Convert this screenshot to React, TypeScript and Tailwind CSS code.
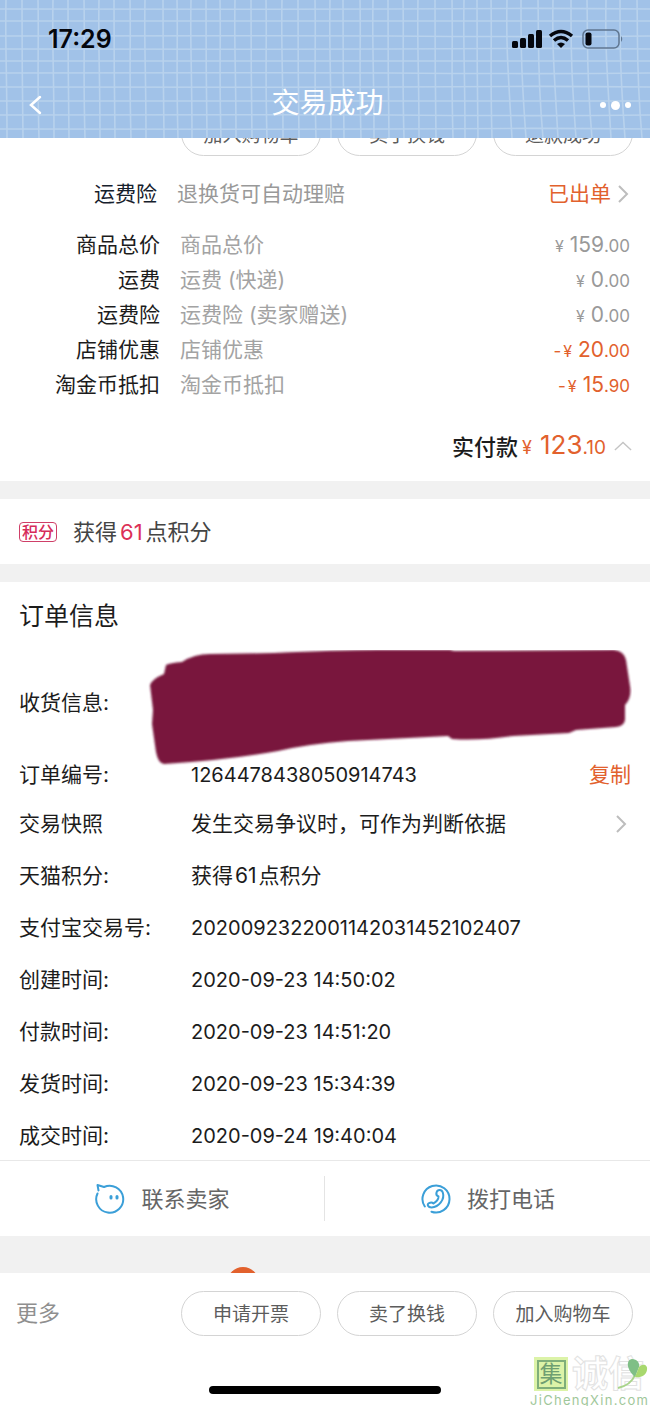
import React from "react";

const GRID_X = [
    6, 22, 38, 53, 68, 84, 99, 114, 130, 145, 163, 177, 191, 206, 220, 235, 251, 266, 282, 298, 315,
    330, 343, 360, 373, 388, 403, 418, 435, 452, 464, 477, 491, 507, 521, 538, 553, 571, 587, 606, 620, 637,
];
const GRID_Y = [9, 21, 36, 49, 61, 73, 87, 101, 115, 129];

const FEES = [
    { label: "商品总价", detail: "商品总价", yuan: "159", cents: "00", off: false },
    { label: "运费", detail: "运费 (快递)", yuan: "0", cents: "00", off: false },
    { label: "运费险", detail: "运费险 (卖家赠送)", yuan: "0", cents: "00", off: false },
    { label: "店铺优惠", detail: "店铺优惠", yuan: "20", cents: "00", off: true },
    { label: "淘金币抵扣", detail: "淘金币抵扣", yuan: "15", cents: "90", off: true },
];

const DETAILS = [
    { label: "支付宝交易号:", value: "2020092322001142031452102407" },
    { label: "创建时间:", value: "2020-09-23 14:50:02" },
    { label: "付款时间:", value: "2020-09-23 14:51:20" },
    { label: "发货时间:", value: "2020-09-23 15:34:39" },
    { label: "成交时间:", value: "2020-09-24 19:40:04" },
];

const PillButton: React.FC<{ children: string }> = ({ children }) => (
    <button
        type="button"
        className="h-[45px] w-[140px] shrink-0 rounded-full border border-[#d4d4d4] bg-white pt-1 text-[19px] text-[#5c5c5c]"
    >
        {children}
    </button>
);

const ArrowRight = () => (
    <svg width="12" height="20" viewBox="0 0 12 20" fill="none" stroke="#bdbdbd" strokeWidth="2" aria-hidden="true">
        <path d="M2 2 L10 10 L2 18" />
    </svg>
);

const GridPattern = () => (
    <svg
        className="absolute inset-0 h-full w-full"
        viewBox="0 0 650 138"
        preserveAspectRatio="none"
        fill="none"
        stroke="#b8d2ed"
        strokeWidth="1.600"
        aria-hidden="true"
    >
        {GRID_X.map((x, i) => {
            const bend = (i % 3) - 1;
            const lean = x > 500 ? 5 : 1;
            return <path key={x} d={`M${x} 0 C${x + bend} 45 ${x - bend} 70 ${x + lean} 138`} />;
        })}
        {GRID_Y.map((y, i) => {
            const bend = (i % 3) - 1;
            return <path key={y} d={`M0 ${y} C160 ${y + bend} 260 ${y - bend} 390 ${y} S560 ${y + bend} 650 ${y}`} />;
        })}
    </svg>
);

const StatusIcons = () => (
    <svg width="112" height="22" viewBox="0 0 112 22" aria-hidden="true">
        <g fill="#05070d">
            <rect x="1" y="13" width="6" height="7" rx="1.500" />
            <rect x="9" y="10" width="6" height="10" rx="1.500" />
            <rect x="17" y="6" width="6" height="14" rx="1.500" />
            <rect x="25" y="2" width="6" height="18" rx="1.500" />
            <path d="M50 20 L46 16 Q50 13 54 16 Z" />
        </g>
        <g fill="none" stroke="#05070d" strokeWidth="3.500">
            <path d="M39 8 Q50 -1 61 8" />
            <path d="M43 12.500 Q50 6.500 57 12.500" />
        </g>
        <rect x="72" y="2" width="36" height="18" rx="5" fill="none" stroke="#5f7690" strokeWidth="1.500" />
        <rect x="74.500" y="4.500" width="6" height="13" rx="2" fill="#05070d" />
        <path d="M110 8 Q112.500 11 110 14 Z" fill="#5f7690" />
    </svg>
);

const SellerIcon = () => (
    <svg width="32" height="32" viewBox="0 0 32 32" fill="none" stroke="#3b9fd8" strokeWidth="2" strokeLinecap="round" aria-hidden="true">
        <path d="M3.500 10.500 A13.500 13.500 0 1 0 10 4 L3.500 2 L4.500 7.500" strokeLinejoin="round" />
        <path d="M17 13.500 V15 M23 13.500 V15" strokeWidth="3" />
    </svg>
);

const PhoneIcon = () => (
    <svg width="32" height="32" viewBox="0 0 32 32" fill="none" stroke="#3b9fd8" strokeWidth="2" strokeLinecap="round" aria-hidden="true">
        <path d="M4.800 23.500 A13.500 13.500 0 1 1 11.500 28.700" />
        <path
            d="M16.500 9.500 C17.500 6.500 21.500 6 22.800 9.500 C25 16.500 19 24 11.500 24.500 C8 24.500 6.500 21.500 9 20.200 C10.500 19.300 12.300 19.300 13.200 20.500 C16.500 18.800 18.500 16.500 18.500 13.500 C16.800 12.800 16 11.200 16.500 9.500 Z"
            strokeLinejoin="round"
        />
    </svg>
);

const Redaction = () => (
    <svg
        className="absolute left-[148px] top-0 h-[117px] w-[calc(100%-166px)]"
        viewBox="0 0 484 117"
        preserveAspectRatio="none"
        aria-hidden="true"
    >
        <defs>
            <filter id="brush" x="-5%" y="-5%" width="110%" height="110%">
                <feGaussianBlur stdDeviation="1.200" />
            </filter>
        </defs>
        <path
            filter="url(#brush)"
            fill="#79193d"
            d="M2 35 Q4 29 16 24 L18 15 Q22 13 34 12 Q46 4 62 4 L126 3 Q190 0 230 0 L302 0 L306 1 L466 0 Q476 1 478 10 L482 36 Q484 48 477 55 L477 70 Q476 76 468 77 L428 80 L421 83 L365 86 Q330 91 304 89 L300 86 L200 91 Q160 94 130 101 Q80 110 16 114 Q10 113 8 102 L4 74 L5 60 Z"
        />
    </svg>
);

const Watermark = () => (
    <div className="absolute bottom-0 right-0 w-[120px]" aria-hidden="true">
        <div className="flex h-[34px] items-center gap-1 pl-[4px]">
            <span className="flex size-[34px] shrink-0 items-center justify-center bg-[#dcf3a8]">
                <span className="flex size-[29px] items-center justify-center border-2 border-[#7fae7a] text-[23px] leading-none text-[#6f9f72]">
                    集
                </span>
            </span>
            <span className="text-[36px] font-bold leading-none text-white [-webkit-text-stroke:1px_#e2e2e2]">诚信</span>
        </div>
        <svg className="absolute right-0 top-0" width="36" height="34" viewBox="0 0 36 34">
            <path d="M4 31 Q17 28 21 18" fill="none" stroke="#a9d48a" strokeWidth="2" />
            <path d="M21 20 C12 12 12 3 18 2 C23 2 26 6 25 10 Z" fill="#7fbf86" />
            <path d="M21 20 L25 10 C29 6 34 8 33 13 C32 19 26 21 21 20 Z" fill="#a8d86e" />
        </svg>
        <div className="mt-[3px] whitespace-nowrap text-[13px] leading-[12px] tracking-widest text-[#9fc79a]">JiChengXin.com</div>
    </div>
);

export default function App() {
    return (
        <main className="relative w-full overflow-hidden bg-white font-['Inter','Noto_Sans_CJK_SC',sans-serif] text-[21px] leading-[30px] text-[#1c1c1c]">
            <header className="relative bg-[#a1c2e8]">
                <GridPattern />
                <div className="relative flex h-[72px] items-center justify-between pl-[48px] pr-[27px] pt-[6px]">
                    <span className="text-[25px] font-semibold text-[#05070d]">17:29</span>
                    <StatusIcons />
                </div>
                <div className="relative flex h-[66px] items-center justify-between pl-[28px] pr-[19px] text-white">
                    <button type="button" aria-label="返回" className="flex w-8 justify-start">
                        <svg width="14" height="20" viewBox="0 0 14 20" fill="none" stroke="currentColor" strokeWidth="2.500" strokeLinecap="round">
                            <path d="M12 2 L3 10 L12 18" />
                        </svg>
                    </button>
                    <h1 className="pb-1 text-[28px]">交易成功</h1>
                    <button type="button" aria-label="更多选项" className="flex w-9 items-center justify-end gap-[5px]">
                        <span className="size-[6px] shrink-0 rounded-full bg-white" />
                        <span className="size-[9px] shrink-0 rounded-full bg-white" />
                        <span className="size-[6px] shrink-0 rounded-full bg-white" />
                    </button>
                </div>
            </header>

            {/* Item actions, scrolled under the header */}
            <div className="flex h-[18px] items-end justify-end gap-4 overflow-hidden pr-[17px]">
                <PillButton>加入购物车</PillButton>
                <PillButton>卖了换钱</PillButton>
                <PillButton>退款成功</PillButton>
            </div>

            <section>
                <a href="#insurance" className="flex h-[71px] items-center pl-5 pr-[21px] pt-1">
                    <span className="w-[137px] text-right text-[#16202c]">运费险</span>
                    <span className="ml-5 text-[#999]">退换货可自动理赔</span>
                    <span className="ml-auto mr-[6px] text-[#e2612d]">已出单</span>
                    <ArrowRight />
                </a>
                <dl>
                    {FEES.map((fee) => (
                        <div key={fee.label} className="flex h-[35px] items-center px-5">
                            <dt className="w-[140px] text-right">{fee.label}</dt>
                            <dd className="ml-5 text-[#a3a3a3]">{fee.detail}</dd>
                            <dd className={`ml-auto flex items-baseline pt-[2px] ${fee.off ? "text-[#e2612d]" : "text-[#999]"}`}>
                                {fee.off && <span className="mr-[2px] text-[17px]">-</span>}
                                <span className="mr-[6px] text-[16px]">¥</span>
                                <span className="text-[21px]">{fee.yuan}</span>
                                <span className="text-[17px]">.{fee.cents}</span>
                            </dd>
                        </div>
                    ))}
                </dl>
                <div className="flex h-[79px] items-center justify-end pr-[18px] pt-[10px]">
                    <span className="mr-1 text-[22px] font-medium">实付款</span>
                    <span className="flex items-baseline text-[#e2612d]">
                        <span className="mr-2 text-[18px]">¥</span>
                        <span className="text-[26px]">123</span>
                        <span className="text-[19px]">.10</span>
                    </span>
                    <button type="button" aria-label="收起" className="ml-2">
                        <svg width="18" height="11" viewBox="0 0 20 12" fill="none" stroke="#c4c4c4" strokeWidth="1.500">
                            <path d="M1 10 L10 1.500 L19 10" />
                        </svg>
                    </button>
                </div>
            </section>

            <section className="border-y-[18px] border-[#f1f1f1]">
                <div className="flex h-[65px] items-center px-[19px]">
                    <span className="flex h-5 w-[38px] items-center justify-center rounded-sm border border-[#cf3f68] text-[16px] font-medium text-[#d62c5a]">
                        积分
                    </span>
                    <p className="ml-4 text-[22px] text-[#444]">
                        获得<span className="mx-[3px] text-[#dc2f57]">61</span>点积分
                    </p>
                </div>
            </section>

            <section>
                <h2 className="flex h-[68px] items-center px-[19px] text-[25px]">订单信息</h2>
                <dl className="-mb-[2px]">
                    <div className="relative flex h-[102px] items-center px-[19px] pt-1">
                        <dt>收货信息:</dt>
                        <dd>
                            <Redaction />
                        </dd>
                    </div>
                    <div className="flex h-[46px] items-center px-[19px]">
                        <dt className="w-[172px]">订单编号:</dt>
                        <dd className="text-[20px]">1264478438050914743</dd>
                        <dd className="ml-auto">
                            <button type="button" className="text-[#e2612d]">复制</button>
                        </dd>
                    </div>
                    <div className="flex h-[52px] items-center pl-[19px] pr-[23px]">
                        <dt className="w-[172px]">交易快照</dt>
                        <dd className="flex-1">
                            <a href="#snapshot" className="flex items-center justify-between">
                                发生交易争议时，可作为判断依据
                                <ArrowRight />
                            </a>
                        </dd>
                    </div>
                    <div className="flex h-[52px] items-center px-[19px]">
                        <dt className="w-[172px]">天猫积分:</dt>
                        <dd>
                            获得<span className="mx-[2px]">61</span>点积分
                        </dd>
                    </div>
                    {DETAILS.map((row) => (
                        <div key={row.label} className="flex h-[52px] items-center px-[19px]">
                            <dt className="w-[172px]">{row.label}</dt>
                            <dd className="text-[20px]">{row.value}</dd>
                        </div>
                    ))}
                </dl>
            </section>

            <div className="grid h-[76px] grid-cols-2 items-center border-t border-[#e8e8e8] text-[22px] text-[#666]">
                <button type="button" className="flex h-[45px] items-center justify-center gap-[15px] border-r border-[#e4e4e4]">
                    <SellerIcon />
                    联系卖家
                </button>
                <button type="button" className="flex h-[45px] items-center justify-center gap-[15px]">
                    <PhoneIcon />
                    拨打电话
                </button>
            </div>

            {/* Top edge of the next card, cut off by the footer */}
            <div className="flex h-[37px] items-end overflow-hidden bg-[#f1f1f1] pl-[227px]">
                <span className="-mb-[26px] size-8 rounded-full bg-[#e2612d]" />
            </div>

            <footer>
                <div className="flex h-[80px] items-center gap-4 pl-4 pr-[17px]">
                    <button type="button" className="mr-auto text-[22px] text-[#8f8f8f]">更多</button>
                    <PillButton>申请开票</PillButton>
                    <PillButton>卖了换钱</PillButton>
                    <PillButton>加入购物车</PillButton>
                </div>
                <div className="flex h-[53px] items-end justify-center pb-3">
                    <span className="h-2 w-[232px] rounded-full bg-black" />
                </div>
            </footer>
            <Watermark />
        </main>
    );
}
